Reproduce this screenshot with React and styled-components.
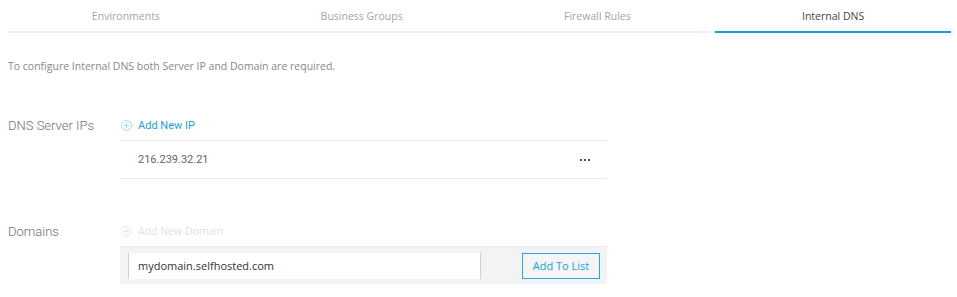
import React from 'react';
import styled, { createGlobalStyle } from 'styled-components';

const GlobalStyle = createGlobalStyle`
  body {
    margin: 0;
    background: #fff;
    font-family: "Open Sans", "Liberation Sans", sans-serif;
  }
`;

const Page = styled.div`
  padding: 0 6px 0 8px;
  width: 957px;
  box-sizing: border-box;
`;

const Tabs = styled.div`
  display: grid;
  grid-template-columns: repeat(4, 1fr);
  border-bottom: 2px solid #f0f0f0;
`;

const Tab = styled.div`
  height: 31px;
  display: flex;
  align-items: center;
  justify-content: center;
  font-size: 10.5px;
  color: ${({ active }) => (active ? '#444' : '#a5a5a5')};
  margin-bottom: -2px;
  border-bottom: 2px solid ${({ active }) => (active ? '#1a9bd7' : 'transparent')};
`;

const Info = styled.p`
  margin: 26px 0 0;
  font-size: 10.5px;
  line-height: 14px;
  color: #888;
`;

const Section = styled.div`
  display: flex;
  margin-top: ${({ top }) => top}px;
`;

const Label = styled.div`
  width: 112px;
  height: 30px;
  display: flex;
  align-items: center;
  font-family: Roboto, "Liberation Sans", sans-serif;
  font-weight: 300;
  font-size: 13px;
  color: #707070;
`;

const Content = styled.div`
  width: 487px;
  display: flex;
  flex-direction: column;
`;

const AddLink = styled.div`
  height: 30px;
  display: flex;
  align-items: center;
  gap: 6px;
  padding-left: 1px;
  font-family: ${({ disabled }) => (disabled ? '"Open Sans"' : 'Roboto')}, "Liberation Sans", sans-serif;
  font-size: ${({ disabled }) => (disabled ? '10.5px' : '11px')};
  color: ${({ disabled }) => (disabled ? '#e2e2e2' : '#1a9fd9')};
  cursor: ${({ disabled }) => (disabled ? 'default' : 'pointer')};
`;

const IpRow = styled.div`
  height: 37px;
  display: flex;
  align-items: center;
  justify-content: space-between;
  padding: 0 17px 0 18px;
  border-top: 1px solid #e6e6e6;
  border-bottom: 1px solid #e6e6e6;
  font-family: Roboto, "Liberation Sans", sans-serif;
  font-size: 11px;
  color: #666;
`;

const Dots = styled.div`
  display: flex;
  gap: 2px;
  span {
    width: 2px;
    height: 2px;
    background: #555;
  }
`;

const Form = styled.div`
  height: 37px;
  display: flex;
  align-items: center;
  justify-content: space-between;
  padding: 0 7px 0 8px;
  background: #f2f3f4;
  border-top: 1px solid #e8e9ea;
`;

const Input = styled.input`
  width: 353px;
  height: 26px;
  box-sizing: border-box;
  border: none;
  border-left: 1px solid #cfcfcf;
  border-right: 1px solid #cfcfcf;
  padding: 0 0 0 9px;
  font-family: "Open Sans", "Liberation Sans", sans-serif;
  font-size: 11px;
  color: #333;
  outline: none;
  background: #fff;
`;

const Button = styled.button`
  width: 78px;
  height: 26px;
  box-sizing: border-box;
  border: 1.5px solid #29a8e0;
  background: #f3f5f7;
  color: #1a9fd9;
  font-family: "Open Sans", "Liberation Sans", sans-serif;
  font-size: 11px;
  padding: 0;
  cursor: pointer;
`;

function PlusCircle({ color }) {
  return (
    <svg width="11" height="11" viewBox="0 0 11 11" fill="none" stroke={color} strokeWidth="1">
      <circle cx="5.5" cy="5.5" r="5" />
      <path d="M5.5 2.5v6M2.5 5.5h6" />
    </svg>
  );
}

const tabs = ['Environments', 'Business Groups', 'Firewall Rules', 'Internal DNS'];

export default function App() {
  return (
    <>
      <GlobalStyle />
      <Page>
        <Tabs>
          {tabs.map((t) => (
            <Tab key={t} active={t === 'Internal DNS'}>{t}</Tab>
          ))}
        </Tabs>
        <Info>To configure Internal DNS both Server IP and Domain are required.</Info>

        <Section top={37}>
          <Label>DNS Server IPs</Label>
          <Content>
            <AddLink>
              <PlusCircle color="#a6d8f0" />
              Add New IP
            </AddLink>
            <IpRow>
              216.239.32.21
              <Dots><span /><span /><span /></Dots>
            </IpRow>
          </Content>
        </Section>

        <Section top={37}>
          <Label>Domains</Label>
          <Content>
            <AddLink disabled>
              <PlusCircle color="#e6e6e6" />
              Add New Domain
            </AddLink>
            <Form>
              <Input defaultValue="mydomain.selfhosted.com" />
              <Button>Add To List</Button>
            </Form>
          </Content>
        </Section>
      </Page>
    </>
  );
}
